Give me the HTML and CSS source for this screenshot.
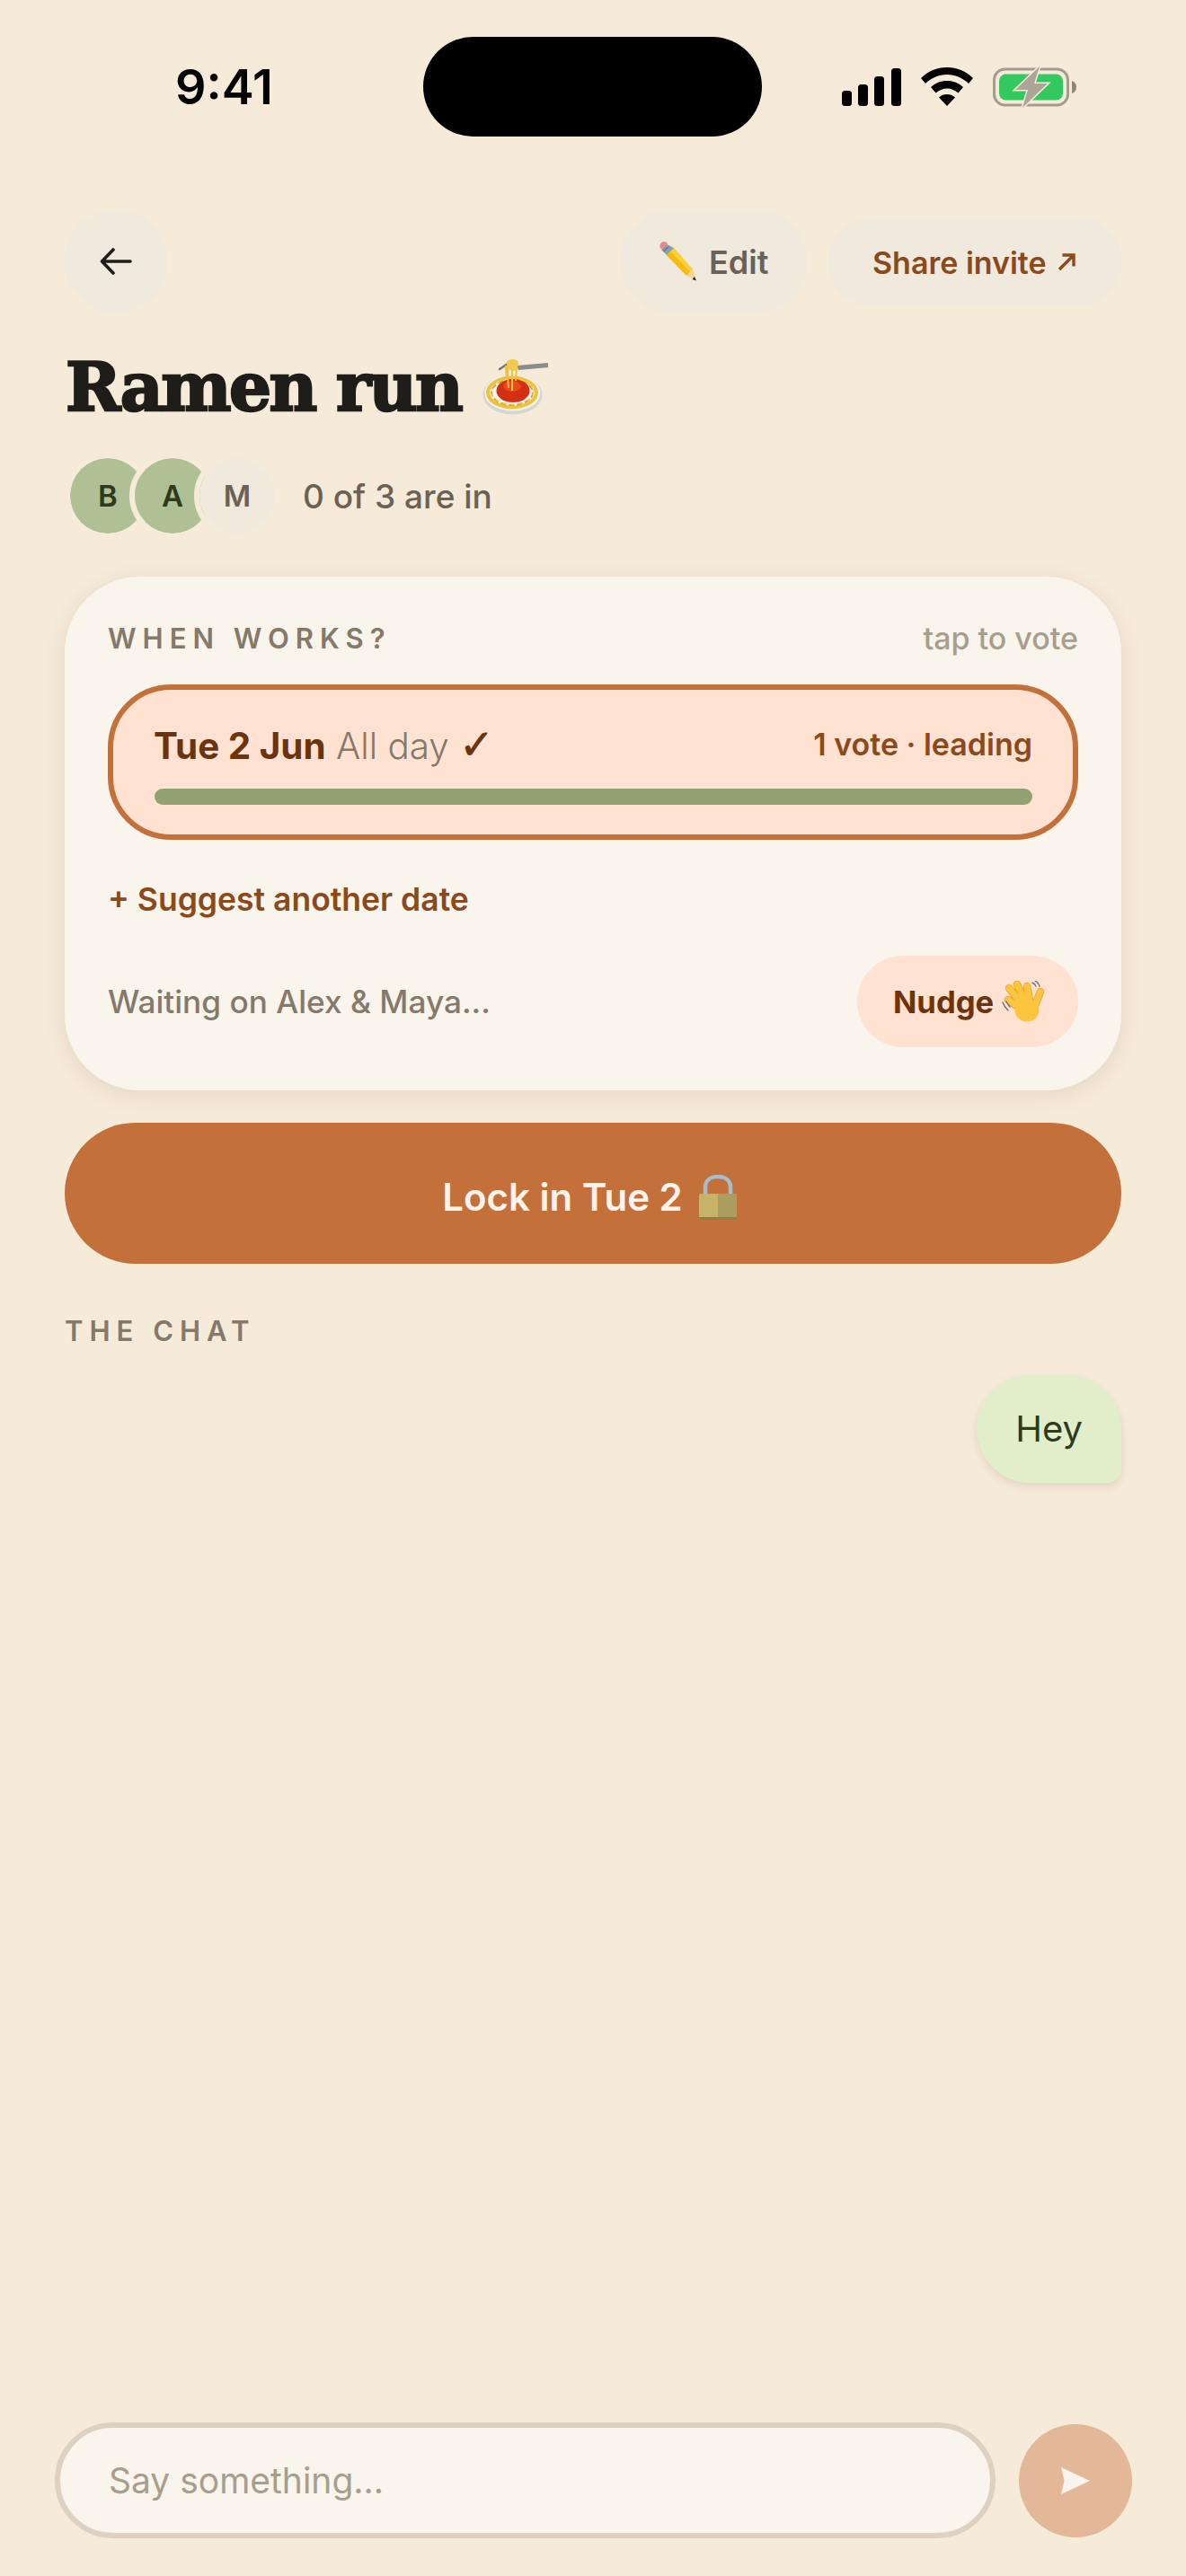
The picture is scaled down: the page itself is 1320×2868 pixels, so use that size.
FILE: index.html
```html
<!DOCTYPE html>
<html lang="en">
<head>
  <meta charset="UTF-8">
  <meta name="viewport" content="width=device-width, initial-scale=1.0">
  <title>Ramen run</title>
  <link rel="stylesheet" href="styles.css">
</head>
<body>
  <div class="screen">
    <!-- Status bar -->
    <div class="status-bar">
      <span class="time">9:41</span>
      <div class="island"></div>
      <div class="status-icons">
        <svg class="signal" viewBox="0 0 66 42" width="66" height="42">
          <rect x="0" y="25" width="11" height="17" rx="3.5"/>
          <rect x="18" y="18" width="11" height="24" rx="3.5"/>
          <rect x="36" y="9" width="11" height="33" rx="3.5"/>
          <rect x="55" y="0" width="11" height="42" rx="3.5"/>
        </svg>
        <svg class="wifi" viewBox="0 0 58 43" width="58" height="43">
          <path d="M29 0C18 0 8 4 0 12l5 6c6-6 15-10 24-10s18 4 24 10l5-6C50 4 40 0 29 0z"/>
          <path d="M29 15c-7 0-13 2.500-18 7l5.500 6.500c3.500-3 8-5 12.500-5s9 2 12.500 5L47 22c-5-4.500-11-7-18-7z"/>
          <path d="M29 30c-3.500 0-6.500 1-9 3.500L29 43l9-9.500c-2.500-2.500-5.500-3.500-9-3.500z"/>
        </svg>
        <svg class="battery" viewBox="0 0 94 46" width="94" height="46">
          <rect x="1.500" y="3" width="82" height="40" rx="12" fill="none" stroke="#a59c90" stroke-width="3"/>
          <path d="M88 16c3 1 5 3.500 5 7s-2 6-5 7z" fill="#8f877b"/>
          <rect x="7" y="8.500" width="71" height="29" rx="7.500" fill="#34c95e"/>
          <path d="M52 0L25 26h14l-6 20 28-27H46z" fill="#aea598" stroke="#f5ebda" stroke-width="3" paint-order="stroke"/>
        </svg>
      </div>
    </div>

    <!-- Top actions -->
    <div class="top-actions">
      <button class="back-btn" aria-label="Back">
        <svg viewBox="0 0 36 30" width="36" height="30">
          <path d="M34 15H3M15 2L2.500 15 15 28" fill="none" stroke="#1f1d1a" stroke-width="3.600" stroke-linecap="round" stroke-linejoin="round"/>
        </svg>
      </button>
      <button class="edit-btn">
        <svg class="emoji-pencil" viewBox="0 0 44 46" width="44" height="46">
          <path d="M11 14L33 37l-1 1-23-22z" fill="#c98a0c"/>
          <path d="M9 16l8-8 21 24-7 7z" fill="#f9b90f"/>
          <path d="M13 12l4-4 21 24-3 3z" fill="#fdd03a"/>
          <path d="M31 39l7-7 4 12z" fill="#f6d690"/>
          <path d="M40 40l2 4.500-4.500-1.500z" fill="#2c2a28"/>
          <path d="M3 10l6-6 8 4-8 8z" fill="#8d9db0"/>
          <path d="M5 13L13 5 9 8 6 11z" fill="#55534f"/>
          <path d="M1.500 5C2 1.500 6 0 8.500 1.500L10 3.500 3.500 9.500C2 8.500 1 7 1.500 5z" fill="#e8878b"/>
        </svg>
        <span>Edit</span>
      </button>
      <button class="share-btn">Share invite
        <svg viewBox="0 0 20 20" width="20" height="20">
          <path d="M2 18L18 2M5.500 2H18v12.500" fill="none" stroke="#8b4a1c" stroke-width="3.400"/>
        </svg>
      </button>
    </div>

    <!-- Title -->
    <div class="title-row">
      <h1>Ramen run</h1>
      <svg class="emoji-pasta" viewBox="0 0 74 62" width="74" height="62">
        <ellipse cx="33.500" cy="39.500" rx="33" ry="22" fill="#d5d5d2"/>
        <ellipse cx="33.500" cy="37.500" rx="31" ry="20" fill="#f5f4f1"/>
        <ellipse cx="33" cy="37" rx="27" ry="16.500" fill="none" stroke="#efc23e" stroke-width="4"/>
        <ellipse cx="33" cy="37" rx="23" ry="14" fill="none" stroke="#dca52a" stroke-width="2" stroke-dasharray="6 3"/>
        <ellipse cx="33" cy="36" rx="24" ry="14" fill="none" stroke="#f4d25f" stroke-width="1.500" stroke-dasharray="4 5"/>
        <ellipse cx="34" cy="35" rx="18.500" ry="13" fill="#d42f12"/>
        <ellipse cx="33" cy="30" rx="10" ry="6" fill="#e8481f"/>
        <path d="M19 11l9-6" fill="none" stroke="#77767a" stroke-width="2.500" stroke-linecap="round"/>
        <path d="M38 7l35-3v5L40 12z" fill="#8c8c8a"/>
        <path d="M28 4c0 8 0 20 1 28M33 3c0 10 0 22 0 32M37 4c1 7 1 12 0 20M26 7c0 4 0 8 1 13" fill="none" stroke="#eec23f" stroke-width="2"/>
        <path d="M27 3c3-4 10-4 13 0l-1 8-4 2-7-2z" fill="#f1ca4b"/>
      </svg>
    </div>

    <!-- Who is in -->
    <div class="people-row">
      <div class="avatars">
        <div class="avatar avatar-in">B</div>
        <div class="avatar avatar-in">A</div>
        <div class="avatar">M</div>
      </div>
      <span class="people-count">0 of 3 are in</span>
    </div>

    <!-- Date poll -->
    <div class="poll-card">
      <div class="poll-head">
        <span class="label">WHEN WORKS?</span>
        <span class="poll-hint">tap to vote</span>
      </div>
      <div class="date-option">
        <div class="date-line">
          <span class="date-name"><strong>Tue 2 Jun</strong> <em>All day</em> <b class="check">✓</b></span>
          <span class="date-votes">1 vote · leading</span>
        </div>
        <div class="vote-bar"></div>
      </div>
      <div class="suggest">+ Suggest another date</div>
      <div class="poll-foot">
        <span class="waiting">Waiting on Alex &amp; Maya...</span>
        <button class="nudge-btn">Nudge
          <svg viewBox="0 0 48 46" width="48" height="46">
            <g fill="none" stroke-linecap="round">
              <g stroke="#e9a22a" stroke-width="8.500">
                <path d="M22 32L7 21M24 28L8 8M28 26L17 4M32 26L28 6M36 30L43 12"/>
              </g>
              <g stroke="#fcc540" stroke-width="7">
                <path d="M22 32L7 21M24 28L8 8M28 26L17 4M32 26L28 6M36 30L43 12"/>
              </g>
              <path d="M1 24c1 3 3 6 6 9M5 23c1 2 2 4 4 6M37 0c3 1 4 3 5 6M34 2c2 1 3 2 4 4" stroke="#6f6f74" stroke-width="1.400"/>
            </g>
            <ellipse cx="28" cy="33" rx="13.500" ry="12.500" fill="#fcc540"/>
          </svg>
        </button>
      </div>
    </div>

    <!-- Lock button -->
    <button class="lock-btn">Lock in Tue 2
      <svg viewBox="0 0 42 50" width="42" height="50">
        <path d="M7 24V14C7 6 13 2 21 2s14 4 14 12v10" fill="none" stroke="#a9bccb" stroke-width="4.500"/>
        <rect x="0" y="21" width="42" height="29" rx="2" fill="#c7b367"/>
        <rect x="21" y="21" width="21" height="29" rx="1" fill="#ab9d5f"/>
        <rect x="0" y="47" width="42" height="3" rx="1" fill="#8f7f45"/>
      </svg>
    </button>

    <!-- Chat -->
    <div class="chat">
      <div class="label chat-label">THE CHAT</div>
      <div class="bubble">Hey</div>
    </div>

    <!-- Composer -->
    <div class="composer">
      <div class="composer-input">Say something...</div>
      <button class="send-btn" aria-label="Send">
        <svg viewBox="0 0 32 30" width="32" height="30">
          <path d="M0 0L32 15 0 30 3.500 15z" fill="#f9f4ec"/>
        </svg>
      </button>
    </div>
  </div>
</body>
</html>
```

FILE: styles.css
```css
:root {
  --bg: #f6ead9;
  --card: #f9f4ec;
  --chip: #f0e9dd;
  --rust: #c4703a;
  --rust-dark: #8b4a1c;
  --rust-deep: #6b3410;
  --peach: #ffe2d1;
  --ink: #1f1d1a;
  --muted: #6b6155;
  --soft: #85796a;
  --faint: #a89e8e;
}

* {
  margin: 0;
  padding: 0;
  box-sizing: border-box;
}

body {
  font-family: Inter, "Noto Sans", sans-serif;
  background-color: var(--bg);
  color: var(--ink);
}

button {
  font-family: inherit;
  border: none;
  cursor: pointer;
}

.screen {
  display: flex;
  flex-direction: column;
  height: 2868px;
  padding: 0 72px;
  overflow: hidden;
}

/* Status bar */
.status-bar {
  display: flex;
  align-items: center;
  height: 111px;
  margin: 41px 0 82px;
}

.time {
  width: 399px;
  padding-left: 123px;
  font-size: 54px;
  font-weight: 600;
  color: #000;
}

.island {
  width: 377px;
  height: 111px;
  border-radius: 56px;
  background-color: #000;
}

.status-icons {
  display: flex;
  align-items: center;
  gap: 22px;
  margin-left: 89px;
}

/* Top actions */
.top-actions {
  display: flex;
  align-items: center;
  gap: 24px;
  height: 114px;
}

.back-btn {
  display: flex;
  align-items: center;
  justify-content: center;
  width: 114px;
  height: 114px;
  margin-right: auto;
  border-radius: 50%;
  background-color: var(--chip);
}

.edit-btn, .share-btn {
  display: flex;
  align-items: center;
  border-radius: 57px;
  background-color: var(--chip);
  font-weight: 600;
}

.edit-btn {
  gap: 12px;
  width: 208px;
  height: 114px;
  padding-left: 43px;
  color: var(--muted);
  font-size: 36px;
}

.edit-btn span {
  padding-top: 2px;
}

.share-btn {
  gap: 12px;
  width: 326px;
  height: 98px;
  padding: 2px 0 0 49px;
  color: var(--rust-dark);
  font-size: 34px;
}

/* Title */
.title-row {
  display: flex;
  align-items: center;
  gap: 24px;
  height: 72px;
  margin: 47px 0 0 1px;
}

h1 {
  font-family: "DejaVu Serif", serif;
  font-size: 74px;
  font-weight: 700;
  letter-spacing: -2.500px;
  -webkit-text-stroke: 2.500px var(--ink);
}

/* Avatars */
.people-row {
  display: flex;
  align-items: center;
  gap: 25px;
  margin-top: 37px;
}

.avatars {
  display: flex;
}

.avatar {
  display: flex;
  align-items: center;
  justify-content: center;
  width: 96px;
  height: 96px;
  border: 6px solid var(--bg);
  border-radius: 50%;
  background-color: var(--chip);
  background-clip: padding-box;
  color: var(--muted);
  font-size: 33px;
  font-weight: 600;
}

.avatar + .avatar {
  margin-left: -24px;
}

.avatar-in {
  background-color: #aec094;
  color: #2d3a1c;
}

.people-count {
  font-size: 37px;
  font-weight: 500;
  color: var(--muted);
}

/* Poll card */
.poll-card {
  display: flex;
  flex-direction: column;
  height: 572px;
  margin-top: 42px;
  padding: 48px 48px 0;
  border-radius: 84px;
  background-color: var(--card);
  box-shadow: 0 6px 24px rgba(90, 60, 30, 0.1);
}

.poll-head {
  display: flex;
  justify-content: space-between;
  align-items: center;
  height: 40px;
}

.label {
  font-size: 31px;
  font-weight: 600;
  letter-spacing: 7px;
  color: var(--soft);
}

.poll-hint {
  font-size: 34px;
  font-weight: 500;
  color: var(--faint);
}

.date-option {
  height: 173px;
  margin-top: 32px;
  padding: 30px 45px 0 46px;
  border: 6px solid var(--rust);
  border-radius: 70px;
  background-color: var(--peach);
}

.date-line {
  display: flex;
  justify-content: space-between;
  align-items: center;
  height: 61px;
}

.date-name {
  margin-left: -1px;
  font-size: 40.400px;
  color: var(--rust-deep);
}

.date-name strong {
  font-weight: 700;
}

.date-name em {
  font-style: normal;
  font-weight: 300;
  color: var(--soft);
}

.check {
  font-family: "DejaVu Sans", sans-serif;
  font-size: 46px;
  font-weight: 700;
  -webkit-text-stroke: 0.800px var(--rust-deep);
}

.date-votes {
  font-size: 34px;
  font-weight: 600;
  color: var(--rust-dark);
}

.vote-bar {
  height: 18px;
  margin-top: 19px;
  border-radius: 9px;
  background-color: #92a172;
}

.suggest {
  margin-top: 45px;
  font-size: 35.500px;
  font-weight: 600;
  color: var(--rust-dark);
}

.poll-foot {
  display: flex;
  justify-content: space-between;
  align-items: center;
  margin-top: 41px;
}

.waiting {
  font-size: 35.200px;
  font-weight: 500;
  color: var(--soft);
}

.nudge-btn {
  display: flex;
  align-items: center;
  gap: 9px;
  width: 246px;
  height: 102px;
  padding-left: 40px;
  border-radius: 51px;
  background-color: var(--peach);
  color: var(--rust-deep);
  font-size: 34.600px;
  font-weight: 700;
}

/* Lock button */
.lock-btn {
  display: flex;
  align-items: center;
  justify-content: center;
  gap: 18px;
  flex-shrink: 0;
  height: 157px;
  margin-top: 36px;
  padding: 8px 8px 0 0;
  border-radius: 79px;
  background-color: var(--rust);
  color: #fff4ee;
  font-size: 42px;
  font-weight: 600;
}

/* Chat */
.chat {
  display: flex;
  flex-direction: column;
  flex: 1;
  margin-top: 56px;
}

.bubble {
  align-self: flex-end;
  margin-top: 31px;
  padding: 30px 43px;
  border-radius: 60px 60px 16px 60px;
  background-color: #e2edca;
  box-shadow: 0 4px 10px rgba(90, 60, 30, 0.12);
  color: #2d3a1c;
  font-size: 40px;
  line-height: 60px;
}

/* Composer */
.composer {
  display: flex;
  align-items: center;
  gap: 26px;
  margin: 0 -12px 42px -11px;
}

.composer-input {
  display: flex;
  align-items: center;
  width: 1048px;
  height: 129px;
  padding-left: 54px;
  border: 6px solid #ddd2c1;
  border-radius: 65px;
  background-color: var(--card);
  color: var(--faint);
  font-size: 39px;
}

.send-btn {
  display: flex;
  align-items: center;
  justify-content: center;
  width: 126px;
  height: 126px;
  border-radius: 50%;
  background-color: #e2b898;
}
```
